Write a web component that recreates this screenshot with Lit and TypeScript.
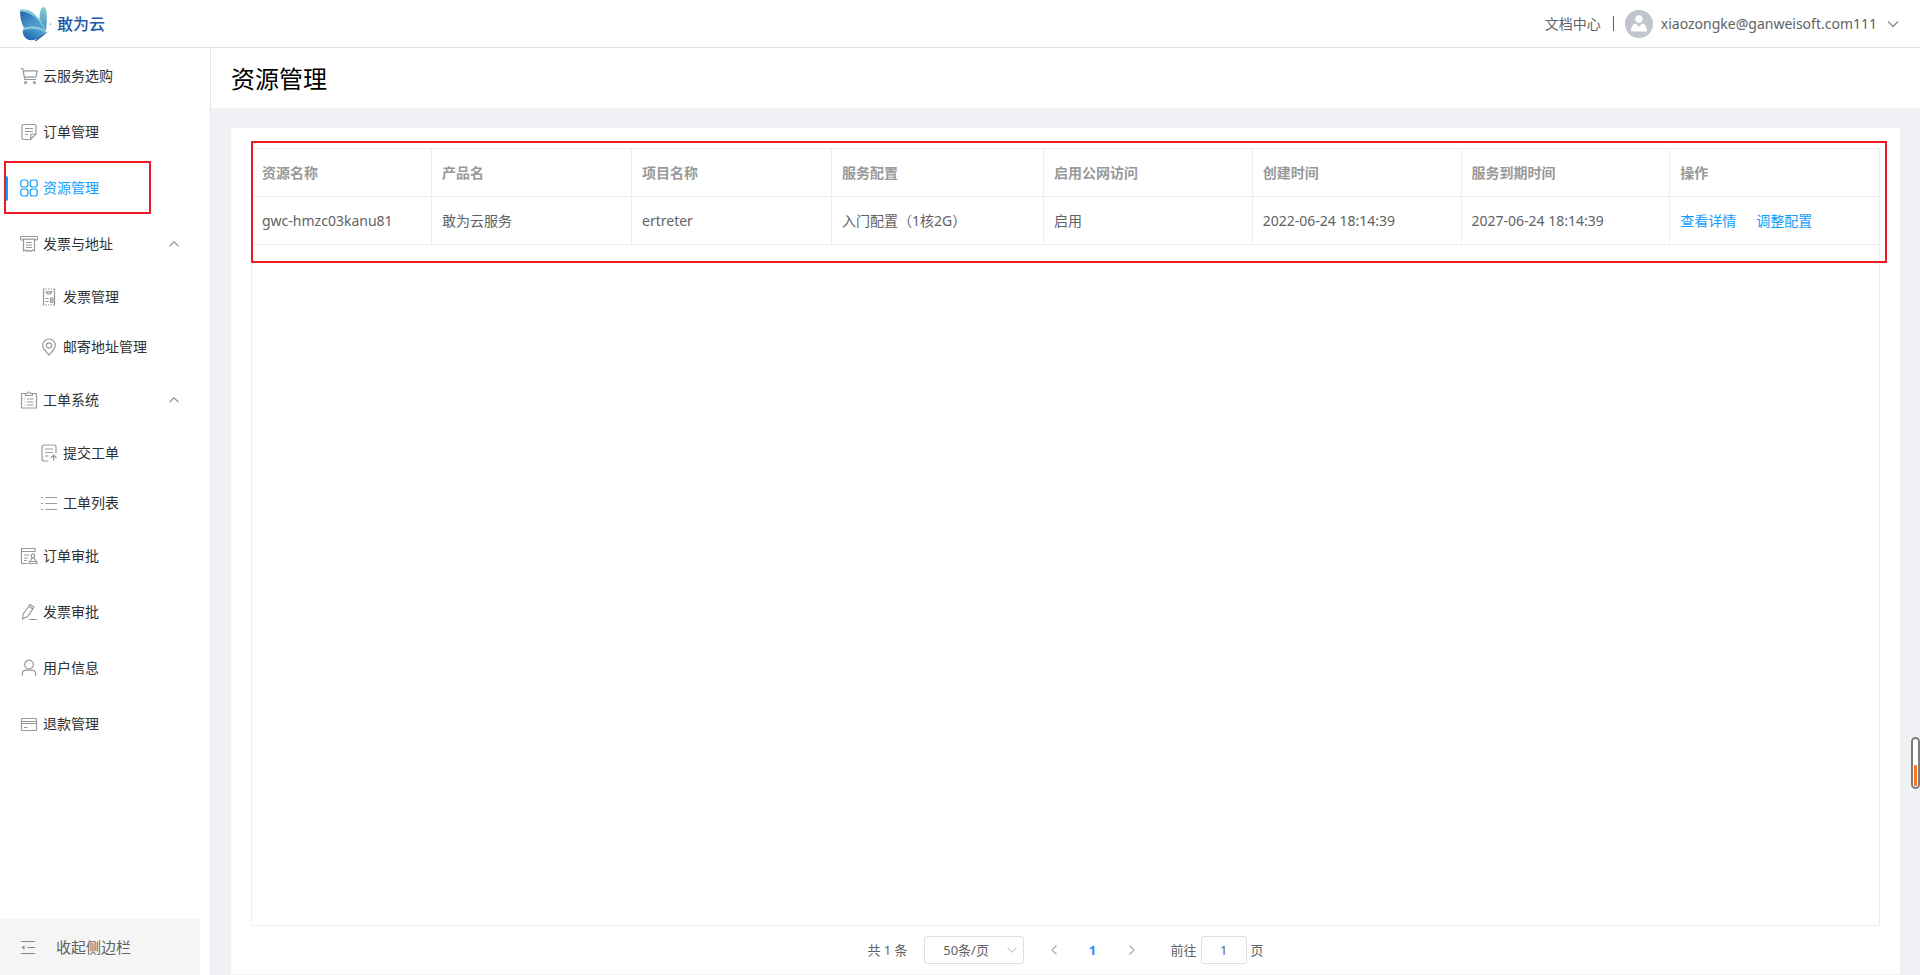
import { LitElement, html, css, svg, nothing } from "lit";
import { customElement, property, state } from "lit/decorators.js";
import { classMap } from "lit/directives/class-map.js";

const icons: Record<string, unknown> = {
  cart: svg`<path d="M.5 1.5h2.3l2 11h11.4M3.4 3.8h14l-1.6 6.4H4.6"/><circle cx="5.6" cy="15.6" r="1"/><circle cx="14.4" cy="15.6" r="1"/>`,
  order: svg`<path d="M16 10.500V3a1.500 1.500 0 0 0-1.500-1.500h-11A1.500 1.500 0 0 0 2 3v12a1.500 1.500 0 0 0 1.500 1.500H10.500L16 11h-4a1.300 1.300 0 0 0-1.300 1.300V16.500M5 5.500h8M5 8.500h8M5 11.500h3"/>`,
  grid: svg`<rect x=".8" y="1" width="7" height="7" rx="2.200"/><rect x="10.200" y="1" width="7" height="7" rx="2.200"/><rect x=".8" y="10" width="7" height="7" rx="2.200"/><rect x="10.200" y="10" width="7" height="7" rx="2.200"/>`,
  invoice: svg`<path d="M3 5H1.500a1 1 0 0 1-1-1V2.500a1 1 0 0 1 1-1h15a1 1 0 0 1 1 1V4a1 1 0 0 1-1 1H15M2.500 4.200h13M3.500 4.500V16l2-1 1.800 1.500L9 15.200l1.700 1.300 1.800-1.500 2 1V4.500M6 7.500h6M6 10h6M6 12.500h6"/>`,
  ticket: svg`<path d="M3.500 1v16M14.500 1v16"/><path stroke-dasharray="1.500 1" d="M3 1h12M3 17h12"/><path d="M6 3.800h6l-2 2.200h-2zM5 10.500h3.500M5 13.500h3.500M10.500 10h2.500v4.500h-2.500zM10.500 12.200h2.500"/>`,
  pin: svg`<path d="M9 17C5 13 2.700 10.500 2.700 7.300a6.300 6.300 0 0 1 12.600 0C15.300 10.500 13 13 9 17z"/><circle cx="9" cy="7.500" r="2.700"/>`,
  clipboard: svg`<path d="M5.500 2.500h-4v14.500h15V2.500h-4M5.500 4.500v-2h2a1.500 1.500 0 0 1 3 0h2v2zM4.500 8h1M4.500 11h1M4.500 14h1M7 8h6.500M7 11h6.500M7 14h6.500"/>`,
  submit: svg`<path d="M16 9V3a2 2 0 0 0-2-2H4a2 2 0 0 0-2 2v12a2 2 0 0 0 2 2h4.500M5 5h8M5 8.500h8M5 12h3.500M13.700 17v-5.500M11 13.800l2.700-2.600 2.800 2.600"/>`,
  list: svg`<path d="M1 3.500h2M1 9.500h2M1 15.500h2M5.500 3.500H17M5.500 9.500H17M5.500 15.500H17"/>`,
  approve: svg`<path d="M15 5V1.500H1.500v15h6M1.500 4.500H15M4 8h5M4 11h4M4 13.500h3M9 14.500h8v2H9zM10 14.300l2-3.300h2l2 3.300"/><circle cx="13" cy="9" r="1.800"/>`,
  pen: svg`<path d="M2.500 16l.7-5L10 1.500l4 2.800L7.500 13.500zM9 3.200l3.800 2.700M9.500 16.500h7.500"/>`,
  user: svg`<circle cx="9" cy="5.500" r="4.300"/><path d="M2.300 16.700v-2a3.500 3.500 0 0 1 3.500-3.500h6.400a3.500 3.500 0 0 1 3.500 3.500v2"/>`,
  card: svg`<rect x="1.500" y="3.500" width="15" height="12" rx="1"/><path d="M1.500 6.500h15M1.500 8.500h15M4 12.500h3.500"/>`,
  collapse: svg`<path d="M1 3.500h14M7.500 9.500h7.500M1 15.500h14"/><path d="M1.500 9.500l3-2.300v4.600z" fill="currentColor" stroke="none"/>`,
  up: svg`<path d="M4.500 11.200L9 6.800l4.500 4.400"/>`,
  down: svg`<path d="M4 6.500l5 5 5-5"/>`,
  left: svg`<path stroke-width="1.600" d="M11.500 4.500L7 9l4.500 4.500"/>`,
  right: svg`<path stroke-width="1.600" d="M6.500 4.500L11 9l-4.500 4.500"/>`,
};

@customElement("ui-icon")
class UiIcon extends LitElement {
  @property() name = "";
  static styles = css`
    :host { display: block; flex: none; width: 18px; height: 18px; }
    .glyph { display: block; width: 100%; height: 100%; fill: none; stroke: currentColor; stroke-width: 1.2; stroke-linejoin: round; }
  `;
  render() {
    return html`<svg class="glyph" viewBox="0 0 18 18" aria-hidden="true">${icons[this.name]}</svg>`;
  }
}

interface MenuEntry { label: string; icon: string; children?: MenuEntry[]; }

const menu: MenuEntry[] = [
  { label: "云服务选购", icon: "cart" },
  { label: "订单管理", icon: "order" },
  { label: "资源管理", icon: "grid" },
  { label: "发票与地址", icon: "invoice", children: [
    { label: "发票管理", icon: "ticket" },
    { label: "邮寄地址管理", icon: "pin" },
  ] },
  { label: "工单系统", icon: "clipboard", children: [
    { label: "提交工单", icon: "submit" },
    { label: "工单列表", icon: "list" },
  ] },
  { label: "订单审批", icon: "approve" },
  { label: "发票审批", icon: "pen" },
  { label: "用户信息", icon: "user" },
  { label: "退款管理", icon: "card" },
];

@customElement("side-menu")
class SideMenu extends LitElement {
  @state() private active = "资源管理";
  @state() private closed: string[] = [];

  static styles = css`
    :host { display: flex; flex-direction: column; min-height: 0; background: #fff; border-right: 1px solid #e4e5ea; }
    .nav { flex: 1; min-height: 0; overflow: hidden; }
    .list { list-style: none; margin: 0; padding: 0; }
    .item { position: relative; }
    .entry { display: flex; align-items: center; gap: 5px; box-sizing: border-box; width: 100%; height: 56px; padding: 0 27px 0 20px; border: 0; background: none; font: inherit; color: #303133; text-decoration: none; text-align: left; cursor: pointer; }
    .entry.sub { height: 50px; padding-left: 40px; }
    .icon { color: #999; }
    .arrow { margin-left: auto; color: #999; }
    .entry.active, .entry.active .icon { color: #0f9dff; }
    .bar { position: absolute; left: 4px; top: 16px; width: 4px; height: 25px; border-radius: 0 2px 2px 0; background: #0f9dff; }
    .mark { position: absolute; left: 4px; top: 1px; width: 143px; height: 49px; border: 2px solid #ed1c24; pointer-events: none; }
    .collapse { display: flex; align-items: center; gap: 18px; height: 56px; margin-right: 10px; padding: 0 20px; border: 0; background: #f5f5f5; color: #606266; font: inherit; font-size: 15px; cursor: pointer; }
    .collapse .icon { color: #888; }
  `;

  private toggle(label: string) {
    this.closed = this.closed.includes(label)
      ? this.closed.filter((l) => l !== label)
      : [...this.closed, label];
  }

  private link(e: MenuEntry, sub = false) {
    const active = e.label === this.active;
    return html`<a class=${classMap({ entry: true, sub, active })} href="#"
      @click=${(ev: Event) => { ev.preventDefault(); this.active = e.label; }}>
      <ui-icon class="icon" name=${e.icon}></ui-icon><span>${e.label}</span></a>
      ${active ? html`<span class="bar"></span><span class="mark"></span>` : nothing}`;
  }

  render() {
    return html`
      <nav class="nav"><ul class="list">
        ${menu.map((e) => e.children
          ? html`<li>
              <button class="entry" type="button" @click=${() => this.toggle(e.label)}>
                <ui-icon class="icon" name=${e.icon}></ui-icon><span>${e.label}</span>
                <ui-icon class="arrow" name=${this.closed.includes(e.label) ? "down" : "up"}></ui-icon>
              </button>
              ${this.closed.includes(e.label) ? nothing : html`<ul class="list">
                ${e.children.map((c) => html`<li class="item">${this.link(c, true)}</li>`)}
              </ul>`}
            </li>`
          : html`<li class="item">${this.link(e)}</li>`)}
      </ul></nav>
      <button class="collapse" type="button"><ui-icon class="icon" name="collapse"></ui-icon><span>收起侧边栏</span></button>
    `;
  }
}

const columns = [
  { title: "资源名称", cls: "c-name" },
  { title: "产品名", cls: "c-mid" },
  { title: "项目名称", cls: "c-mid" },
  { title: "服务配置", cls: "c-conf" },
  { title: "启用公网访问", cls: "" },
  { title: "创建时间", cls: "" },
  { title: "服务到期时间", cls: "" },
  { title: "操作", cls: "" },
];
const rows = [
  ["gwc-hmzc03kanu81", "敢为云服务", "ertreter", "入门配置（1核2G）", "启用", "2022-06-24 18:14:39", "2027-06-24 18:14:39"],
];

@customElement("app-root")
class AppRoot extends LitElement {
  static styles = css`
    :host { display: grid; grid-template: 48px minmax(0, 1fr) / 211px minmax(0, 1fr); height: 100vh; overflow: hidden; background: #f0f1f5; color: #606266; font: 14px/20px "Noto Sans", "Noto Sans CJK SC", sans-serif; }
    .top { grid-column: 1 / -1; display: flex; align-items: center; justify-content: space-between; box-sizing: border-box; padding: 0 18px 0 19px; background: #fff; border-bottom: 1px solid #e2e3e5; }
    .brand { display: flex; align-items: center; gap: 4px; color: #1c5aa6; font-size: 16px; line-height: 24px; font-weight: 500; text-decoration: none; }
    .logo { display: block; width: 34px; height: 36px; }
    .account { display: flex; align-items: center; }
    .doc { color: inherit; text-decoration: none; }
    .sep { width: 1px; height: 15px; margin: 0 11px 0 12px; background: #606266; }
    .user { display: flex; align-items: center; padding: 0; border: 0; background: none; color: inherit; font: inherit; cursor: pointer; }
    .avatar { display: block; width: 28px; height: 28px; margin-right: 8px; }
    .user-arrow { margin-left: 7px; color: #888; }
    .main { display: flex; flex-direction: column; min-width: 0; min-height: 0; }
    .title { margin: 0; padding: 2px 20px 0; background: #fff; color: #000; font-size: 24px; line-height: 58px; font-weight: 400; }
    .card { flex: 1; display: flex; flex-direction: column; min-height: 0; margin: 20px 20px 1px; padding: 20px 20px 0; background: #fff; }
    .frame { position: relative; flex: 1; min-height: 0; border: 1px solid #ebeef5; }
    .table { width: 100%; table-layout: fixed; border-collapse: separate; border-spacing: 0; }
    .c-name { width: 180px; }
    .c-mid { width: 200px; }
    .c-conf { width: 212px; }
    .cell { box-sizing: border-box; height: 48px; padding: 0 10px; border-bottom: 1px solid #ebeef5; border-right: 1px solid #ebeef5; text-align: left; font-weight: 400; white-space: nowrap; }
    .cell:last-child { border-right: 0; }
    .head { color: #999; font-weight: 700; }
    .action { margin-right: 20px; color: #0f9dff; text-decoration: none; }
    .mark { position: absolute; top: -8px; left: -1px; right: -8px; height: 118px; border: 2px solid #ed1c24; pointer-events: none; }
    .pager { display: flex; align-items: center; justify-content: center; height: 48px; font-size: 13px; }
    .size { position: relative; width: 100px; height: 28px; margin: 0 15px 0 16px; }
    .select { box-sizing: border-box; width: 100%; height: 100%; padding: 0 25px 0 10px; appearance: none; border: 1px solid #dcdfe6; border-radius: 3px; background: #fff; color: inherit; font: inherit; text-align: center; text-align-last: center; }
    .size-arrow { position: absolute; right: 4px; top: 6px; width: 16px; height: 16px; color: #c0c4cc; pointer-events: none; }
    .step { display: flex; justify-content: center; align-items: center; width: 30px; height: 28px; padding: 0; border: 0; background: none; color: #b4b8c0; }
    .page { width: 30px; height: 28px; margin: 0 9px; padding: 0; border: 0; background: none; color: #1890ff; font: inherit; font-weight: 700; }
    .jump { display: flex; align-items: center; gap: 4px; margin-left: 24px; }
    .input { box-sizing: border-box; width: 46px; height: 28px; padding: 0 3px; border: 1px solid #dcdfe6; border-radius: 3px; color: inherit; font: inherit; text-align: center; }
    .gauge { position: absolute; right: 0; top: 737px; box-sizing: border-box; width: 9px; height: 52px; padding: 1px; border: 2px solid #7d7d7d; border-radius: 5px; background: #fff; display: flex; align-items: flex-end; }
    .level { flex: 1; height: 21px; border-radius: 1px; background: #ff7327; }
  `;

  render() {
    return html`
      <header class="top">
        <a class="brand" href="#">
          <svg class="logo" viewBox="0 0 34 36" aria-hidden="true">
            <defs>
              <linearGradient id="wing" x1="0" y1="0" x2="1" y2="1"><stop offset="0" stop-color="#1d5fae"/><stop offset=".5" stop-color="#4a95c9"/><stop offset="1" stop-color="#5aa9d0"/></linearGradient>
              <linearGradient id="tip" x1="0" y1="0" x2="0" y2="1"><stop offset="0" stop-color="#86cdd0"/><stop offset="1" stop-color="#3f8fc4"/></linearGradient>
              <linearGradient id="tail" x1="0" y1="1" x2="1" y2="0"><stop offset="0" stop-color="#1456a6"/><stop offset=".7" stop-color="#4d9dcc"/><stop offset="1" stop-color="#7cc9d3"/></linearGradient>
            </defs>
            <path d="M20.500 13C20.500 6 22 1 24.500 1 28 1 28.500 10 27 25z" fill="url(#tip)"/>
            <path d="M1 4C11 2 20 9 27 26 21 20 14 20 5 22 2 17 1 11 1 4z" fill="url(#wing)"/>
            <path d="M1 4C11 2 20 9 27 26 20 12 11 5.500 1 5.500z" fill="#83cdd2"/>
            <path d="M4 23C11 20 21 20 27 26 24 31 17 35 10 34 5 32 3 28 4 23z" fill="url(#tail)"/>
            <path d="M4 23C11 20 21 20 27 26 20 22 11 22 4 24.500z" fill="#8ad0d4"/>
            <path d="M29.500 25L16 34.500 17 35.200 28 26.500z" fill="#134b9b"/>
            <circle cx="31.500" cy="18" r=".6" fill="#1c5aa6"/>
          </svg>
          <span>敢为云</span>
        </a>
        <div class="account">
          <a class="doc" href="#">文档中心</a>
          <span class="sep"></span>
          <button class="user" type="button">
            <svg class="avatar" viewBox="0 0 28 28" aria-hidden="true">
              <circle cx="14" cy="14" r="14" fill="#c0c4cc"/><circle cx="14" cy="9" r="3.700" fill="#fff"/>
              <path d="M6 21.500C6 17 8 13.500 11 13.500L14 17l3-3.500c3 0 5 3.500 5 8z" fill="#fff"/>
            </svg>
            <span>xiaozongke@ganweisoft.com111</span>
            <ui-icon class="user-arrow" name="down"></ui-icon>
          </button>
        </div>
      </header>
      <side-menu></side-menu>
      <main class="main">
        <h1 class="title">资源管理</h1>
        <section class="card">
          <div class="frame">
            <table class="table">
              <thead><tr>${columns.map((c) => html`<th class="cell head ${c.cls}" scope="col">${c.title}</th>`)}</tr></thead>
              <tbody>${rows.map((r) => html`<tr>${r.map((v) => html`<td class="cell">${v}</td>`)}
                <td class="cell"><a class="action" href="#">查看详情</a><a class="action" href="#">调整配置</a></td></tr>`)}</tbody>
            </table>
            <div class="mark"></div>
          </div>
          <div class="pager">
            <span>共 1 条</span>
            <div class="size">
              <select class="select" aria-label="每页条数"><option>50条/页</option></select>
              <ui-icon class="size-arrow" name="down"></ui-icon>
            </div>
            <button class="step" type="button" aria-label="上一页" disabled><ui-icon name="left"></ui-icon></button>
            <button class="page" type="button">1</button>
            <button class="step" type="button" aria-label="下一页" disabled><ui-icon name="right"></ui-icon></button>
            <div class="jump"><label for="page">前往</label><input class="input" id="page" type="text" .value=${"1"}><span>页</span></div>
          </div>
        </section>
      </main>
      <div class="gauge"><span class="level"></span></div>
    `;
  }
}
